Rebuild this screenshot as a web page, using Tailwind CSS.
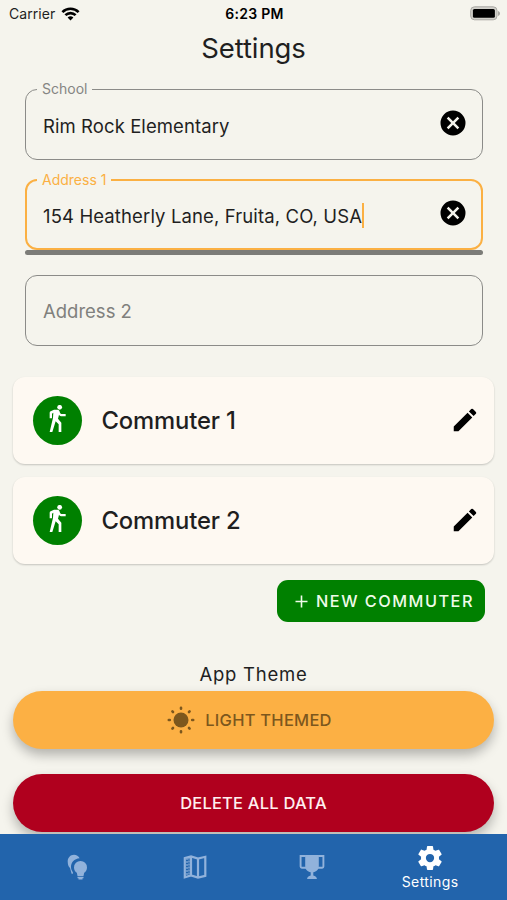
<!DOCTYPE html>
<html lang="en">
<head>
<meta charset="utf-8">
<title>Settings</title>
<script src="https://cdn.jsdelivr.net/npm/@tailwindcss/browser@4"></script>
</head>
<body class="w-[507px] h-[900px] overflow-hidden bg-[#f5f4ed] font-['Inter',sans-serif] text-[#1f1f1f]">
<svg class="hidden">
  <symbol id="walk" viewBox="0 0 75 90"><circle cx="44" cy="7" r="7.200"/><path d="M27 14h11c4 0 5 3 6 6 1 4 3 7 8 7h10v7H51c-4 0-7-2-9-5l-3 12 10 12v28h-8V58L32 49 22 81h-8l10-43 1-15-4 3v14h-7V23c0-2 1-3 3-4z"/></symbol>
  <symbol id="pencil" viewBox="0 0 24 24"><path d="M3 17.250V21h3.750L17.810 9.940l-3.750-3.750L3 17.250zM20.710 7.040a1 1 0 0 0 0-1.410l-2.340-2.340a1 1 0 0 0-1.410 0l-1.830 1.830 3.750 3.750 1.830-1.830z"/></symbol>
  <symbol id="clear" viewBox="0 0 24 24"><path d="M12 2a10 10 0 1 0 0 20 10 10 0 0 0 0-20zm5 13.590L15.590 17 12 13.410 8.410 17 7 15.590 10.590 12 7 8.410 8.410 7 12 10.590 15.590 7 17 8.410 13.410 12 17 15.590z"/></symbol>
</svg>
<div class="flex h-full flex-col">
  <header class="shrink-0">
    <div class="grid h-[27px] grid-cols-3 items-center pl-[9px] pr-[7px] text-[14px]">
      <div class="flex items-center gap-[6px]"><span class="tracking-[0.050px]">Carrier</span>
        <svg class="h-[14px] w-[19px]" viewBox="0 0 18 14" fill="none" stroke="#000" stroke-width="2.600"><path d="M.9 5.100a11.500 11.500 0 0 1 16.200 0M3.900 8.200a7.200 7.200 0 0 1 10.200 0"/><path d="M9 13.500l-2.900-2.900a4.100 4.100 0 0 1 5.800 0z" fill="#000" stroke="none"/></svg>
      </div>
      <div class="text-center text-[14px] font-semibold tracking-[0.300px] text-black">6:23 PM</div>
      <svg class="ml-auto h-[15px] w-[31px]" viewBox="0 0 31 15"><rect x="1.700" y=".8" width="26.300" height="13" rx="3.800" fill="#d2d1cb" stroke="#aaa9a4"/><rect x="3.900" y="3" width="22" height="8.800" rx="1.500"/><path d="M29 5v5c1.400-.5 2-1.400 2-2.500S30.400 5.500 29 5z" fill="#aaa9a4"/></svg>
    </div>
    <h1 class="h-[41px] text-center text-[27.500px] leading-[43px] tracking-[-0.100px]">Settings</h1>
  </header>
  <main class="flex min-h-0 flex-1 flex-col overflow-hidden px-[13px]">
    <section class="pl-[12px] pr-[11.500px]">
      <fieldset class="mt-[12px] h-[80px] rounded-[12px] border-[1.500px] border-[#8b8b88] px-[11px]">
        <legend class="ml-0 h-[18px] px-[5px] text-[14px] leading-[18px] text-[#858583]">School</legend>
        <div class="flex h-[50px] items-center justify-between pl-[6px] pr-[3px]">
          <span class="pt-[7px] text-[18.500px] tracking-[0.080px]">Rim Rock Elementary</span>
          <svg class="size-[30px]"><use href="#clear"/></svg>
        </div>
      </fieldset>
      <fieldset class="mt-[11px] h-[79px] rounded-[12px] border-2 border-[#fbb043] px-[10px]">
        <legend class="h-[18px] px-[5px] text-[14px] leading-[18px] text-[#fbb043]">Address 1</legend>
        <div class="flex h-[48px] items-center pl-[6px] pr-[3px]">
          <span class="pt-[7px] text-[18.500px] tracking-[0.120px]">154 Heatherly Lane, Fruita, CO, USA</span><i class="mt-[5px] h-[25px] w-[2px] bg-[#fbb043]"></i>
          <svg class="ml-auto size-[30px]"><use href="#clear"/></svg>
        </div>
      </fieldset>
      <div class="h-[5px] rounded-full bg-[#7c7c78]"></div>
      <div class="mt-[20px] flex h-[71px] items-center rounded-[12px] border-[1.500px] border-[#8b8b88] px-[17px] pt-[2px] text-[18.500px] text-[#80807d]">Address 2</div>
    </section>
    <section class="mt-[30.500px] flex flex-col gap-[13px]">
      <div class="flex h-[87px] items-center rounded-[12px] bg-[#fef9f2] pl-[19.500px] pr-[14px] shadow-[0_1px_2px_rgba(0,0,0,0.2)]">
        <span class="flex size-[49px] items-center justify-center rounded-full bg-[#008000]"><svg class="h-[30px] w-[25px]" fill="#fff"><use href="#walk"/></svg></span>
        <span class="ml-[20px] pt-[2px] text-[23.800px] font-medium tracking-[-0.150px]">Commuter 1</span>
        <svg class="mb-[1px] ml-auto size-[30px]"><use href="#pencil"/></svg>
      </div>
      <div class="flex h-[87px] items-center rounded-[12px] bg-[#fef9f2] pl-[19.500px] pr-[14px] shadow-[0_1px_2px_rgba(0,0,0,0.2)]">
        <span class="flex size-[49px] items-center justify-center rounded-full bg-[#008000]"><svg class="h-[30px] w-[25px]" fill="#fff"><use href="#walk"/></svg></span>
        <span class="ml-[20px] pt-[2px] text-[23.800px] font-medium tracking-[-0.150px]">Commuter 2</span>
        <svg class="mb-[1px] ml-auto size-[30px]"><use href="#pencil"/></svg>
      </div>
    </section>
    <button class="mr-[9px] mt-[16px] flex h-[42.500px] w-[208px] shrink-0 items-center gap-[8px] self-end rounded-[11px] bg-[#008000] pl-[18px] text-[16.300px] font-medium tracking-[1.500px] whitespace-nowrap text-[#effbe9]"><svg class="mt-[1px] size-[13px] shrink-0" viewBox="0 0 13 13" fill="none" stroke="currentColor" stroke-width="1.600"><path d="M6.500 .5v12M.5 6.500h12"/></svg><span>NEW COMMUTER</span></button>
    <div class="mt-[36.500px] h-[32px] text-center text-[18.500px] leading-[31px] tracking-[0.750px]">App Theme</div>
    <button class="flex h-[58.500px] shrink-0 items-center justify-center gap-[10px] rounded-full bg-[#fcb044] pr-[8px] text-[16.500px] font-medium tracking-[0.250px] text-[#7c571d] shadow-[0_6px_12px_rgba(0,0,0,0.27)]">
      <svg class="size-[28px]" viewBox="0 0 28 28" fill="#7c571d" stroke="#7c571d" stroke-width="2.600" stroke-linecap="round"><circle cx="14" cy="14" r="7.500" stroke="none"/><path d="M14 1.800v1M14 25.200v1M1.800 14h1M25.200 14h1M5.400 5.400l.6.600M22 22l.6.600M5.400 22.600l.6-.6M22 6l.6-.6"/></svg><span class="pt-[1px]">LIGHT THEMED</span>
    </button>
    <button class="mt-[24.500px] h-[58.500px] shrink-0 rounded-full bg-[#b0001e] pt-[2px] text-[16.500px] font-medium tracking-[0.200px] text-[#fff0f0] shadow-[0_6px_12px_rgba(0,0,0,0.27)]">DELETE ALL DATA</button>
  </main>
  <nav class="flex h-[66px] shrink-0 items-center bg-[#2264ac] px-[18px] text-[#91b2db]">
    <div class="flex flex-1 justify-center"><svg class="size-[28px]" viewBox="0 0 28 28" fill="currentColor"><path d="M11 1.800c2.500 0 4.600 1.300 5.600 3.400-5.400.5-8.600 4-8.600 8.800 0 2 .7 3.800 1.900 5.300v1.500H8.600L7 15c-1.700-1.500-2.300-4-2.300-6.500 0-3.800 2.700-6.700 6.300-6.700z"/><path d="M17.500 8a6.400 6.400 0 0 0-6.500 6.400c0 2.500 1.300 4.200 2.800 5.400l.7 3.200h6l.7-3.200c1.500-1.200 2.800-2.900 2.800-5.400A6.400 6.400 0 0 0 17.500 8zM14.500 23.800h6v1.500h-1v1.300h-4v-1.300h-1z"/></svg></div>
    <div class="flex flex-1 justify-center"><svg class="size-[26px]" viewBox="0 0 26 26" fill="none" stroke="currentColor" stroke-width="2.200"><path d="M2.800 4l6.200-1.500 7 2 7.300-1.700v19l-7.300 1.700-7-2-6.200 1.700zM9 2.500v19M16 4.500v19"/><path d="M5 4v18M7 3.500v18" stroke-dasharray="2 1" stroke-width="1.200"/></svg></div>
    <div class="flex flex-1 justify-center"><svg class="size-[28px]" viewBox="0 0 28 28" fill="currentColor"><path d="M7.200 2h13.600v11c0 3.600-2.500 5.800-5.500 6.300v3.200c2 .3 3.600 1.600 3.600 3.500H9.100c0-1.900 1.600-3.200 3.600-3.500v-3.200c-3-.5-5.500-2.700-5.500-6.300z"/><path d="M7.800 3H2.600v10.500c0 .8.400 1.200 1.200 1.200h4.500M20.200 3h5.200v10.500c0 .8-.4 1.200-1.200 1.200h-4.500" fill="none" stroke="currentColor" stroke-width="1.900"/></svg></div>
    <div class="flex flex-1 flex-col items-center text-white"><svg class="size-[30px]" viewBox="0 0 24 24" fill="currentColor"><path d="M19.140 12.940c.04-.3.060-.61.060-.94 0-.32-.02-.64-.07-.94l2.030-1.580c.18-.14.230-.41.120-.61l-1.920-3.320c-.12-.22-.37-.29-.59-.22l-2.390.96c-.5-.38-1.030-.7-1.620-.94l-.36-2.540c-.04-.24-.24-.41-.48-.41h-3.840c-.24 0-.43.170-.47.410l-.36 2.540c-.59.240-1.130.57-1.620.94l-2.390-.96c-.22-.08-.47 0-.59.220L2.740 8.870c-.12.210-.08.470.12.610l2.030 1.580c-.05.300-.09.630-.09.940s.02.640.070.940l-2.030 1.580c-.18.140-.23.410-.12.610l1.920 3.320c.12.220.37.290.59.220l2.390-.96c.5.380 1.030.7 1.620.94l.36 2.540c.05.240.24.410.48.410h3.840c.24 0 .44-.17.470-.41l.36-2.540c.59-.24 1.130-.56 1.620-.94l2.390.96c.22.080.47 0 .59-.22l1.920-3.320c.12-.22.070-.47-.12-.61l-2.010-1.580zM12 15.300a3.300 3.300 0 1 1 0-6.600 3.300 3.300 0 0 1 0 6.600z"/></svg><span class="text-[14px] leading-[18px] tracking-[0.400px]">Settings</span></div>
  </nav>
</div>
</body>
</html>
